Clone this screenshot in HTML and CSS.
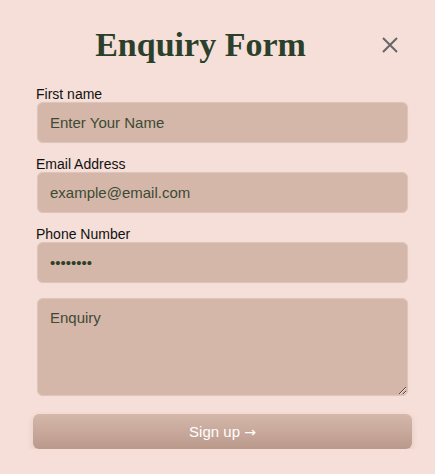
FILE: index.html
```html
<!DOCTYPE html>
<html>
<head>
<meta charset="utf-8">
<link rel="stylesheet" href="styles.css">
</head>
<body>
<form class="form">
  <div class="header">
    <h1 class="title">Enquiry Form</h1>
    <button type="button" class="close" aria-label="Close">
      <svg width="18" height="18" viewBox="0 0 18 18"><path d="M2 2 L16 16 M16 2 L2 16" stroke="#666" stroke-width="2" fill="none"/></svg>
    </button>
  </div>
  <label class="label" for="name">First name</label>
  <input class="field" id="name" type="text" placeholder="Enter Your Name">
  <label class="label" for="email">Email Address</label>
  <input class="field" id="email" type="email" placeholder="example@email.com">
  <label class="label" for="phone">Phone Number</label>
  <input class="field" id="phone" type="password" value="12345678">
  <textarea class="field area" placeholder="Enquiry"></textarea>
  <button type="button" class="submit">Sign up <span class="arrow">→</span></button>
</form>
</body>
</html>
```
FILE: styles.css
```css
html, body {
  margin: 0;
  background: #f5dfd8;
}
body {
  font-family: "Liberation Sans", Arial, sans-serif;
}
.form {
  display: flex;
  flex-direction: column;
  padding: 20px 23px 0 33px;
  width: 379px;
}
.header {
  display: flex;
  align-items: center;
  margin-bottom: 16px;
}
.title {
  flex: 1;
  margin: 0;
  text-align: center;
  font-family: "Liberation Serif", "Times New Roman", serif;
  font-weight: bold;
  font-size: 34px;
  color: #2b3f2a;
  line-height: 50px;
}
.close {
  border: none;
  background: none;
  width: 44px;
  height: 30px;
  padding: 0;
  display: flex;
  align-items: center;
  justify-content: center;
  cursor: pointer;
}
.label {
  font-size: 14px;
  color: #111;
  margin-left: 3px;
  line-height: 16px;
  margin-bottom: 0;
}
.field {
  margin: 0 4px 13px 4px;
  height: 41px;
  box-sizing: border-box;
  border: 1px solid #dcc6bb;
  border-radius: 6px;
  background: #d4b7a9;
  padding: 0 12px;
  font-family: "Liberation Sans", Arial, sans-serif;
  font-size: 15px;
  color: #2b3f2a;
  outline: none;
  box-shadow: 0 0 1px rgba(0,0,0,0.08);
}
.field::placeholder {
  color: #3d4a35;
  opacity: 1;
}
.area {
  margin-top: 2px;
  height: 98px;
  padding: 10px 12px;
  margin-bottom: 18px;
  resize: both;
}
.submit {
  height: 35px;
  border: none;
  border-radius: 6px;
  background: linear-gradient(#d5b8aa, #ba998b);
  color: #fff;
  font-family: "Liberation Sans", Arial, sans-serif;
  font-size: 15px;
  box-shadow: 0 3px 6px rgba(120,80,60,0.15);
  cursor: pointer;
}
.arrow {
  font-family: "DejaVu Sans", sans-serif;
  font-size: 14px;
}
```
